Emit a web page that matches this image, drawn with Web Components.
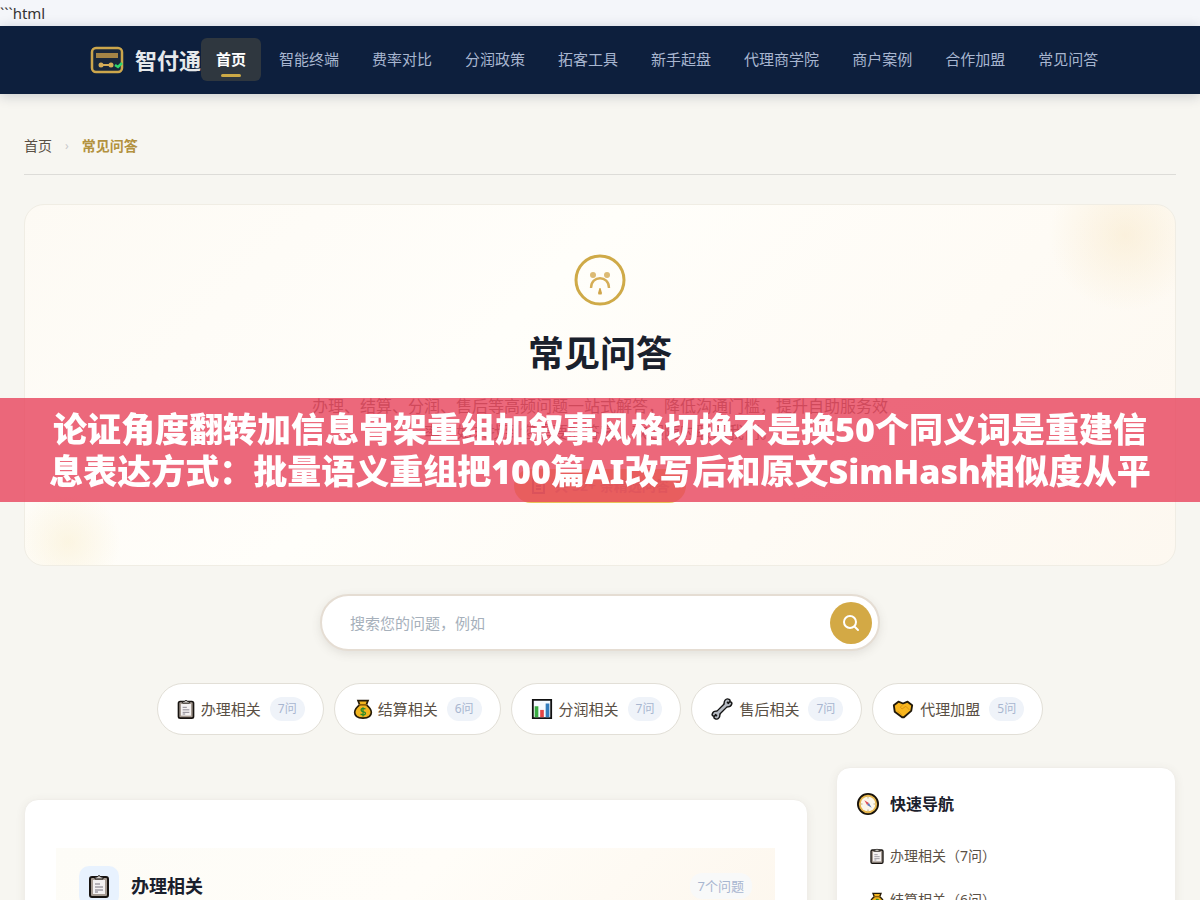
<!DOCTYPE html>
<html lang="zh-CN">
<head>
<meta charset="utf-8">
<meta name="viewport" content="width=device-width, initial-scale=1">
<title>常见问答 - 智付通</title>
<style>
html{scrollbar-width:none}
body{margin:0;background:#f7f6f1;color:#1a202c;font:16px/26px "Noto Sans","Noto Sans CJK SC",sans-serif}
</style>
</head>
<body>
<faq-page></faq-page>
<script>
const define = (name, html, setup) => customElements.define(name, class extends HTMLElement {
  constructor() {
    super();
    const t = document.createElement('template');
    t.innerHTML = html;
    this.attachShadow({mode: 'open'}).append(t.content.cloneNode(true));
  }
  connectedCallback() { if (setup) setup(this, this.shadowRoot); }
});

const icons = {
  clipboard: '<rect x="3" y="3" width="18" height="20" rx="2" fill="#a59a91" stroke="#171310" stroke-width="2"/><path d="M6 6h12v14H6z" fill="#f4f1f1"/><path d="M8 5V3h2q2-3 4 0h2v2z" fill="#d4d0cc" stroke="#171310"/><path d="M8 10h5M8 13h8M8 16h8M8 18h3" stroke="#77727e"/>',
  money: '<path d="M8 7 6 2h12l-2 5c4 3 6 6 6 9 0 5-4 7-10 7S2 21 2 16c0-3 2-6 6-9z" fill="#f2b51e" stroke="#241a08" stroke-width="2"/><path d="M7 7h10" stroke="#8c5e08" stroke-width="2"/><path d="M15 12c-4-2-6 0-5 2s5 1 5 3-3 3-6 1M12 10v11" fill="none" stroke="#298a2a" stroke-width="1.5"/>',
  chart: '<path d="M2 2h20v20H2z" fill="#f5faff" stroke="#111" stroke-width="2"/><path d="M4 9h4v12H4z" fill="#3aac42"/><path d="M10 13h4v8h-4z" fill="#e34545"/><path d="M16 6h4v15h-4z" fill="#337dbd"/>',
  wrench: '<g fill="none" stroke-linecap="round"><g stroke="#141414" stroke-width="6"><path d="M7 17 17 7"/><path d="M3 18c1-3 5-2 5 0 0 2-1 4-3 3M21 6c-1 3-5 2-5 0 0-2 1-4 3-3" stroke-width="5"/></g><g stroke="#b5bac2" stroke-width="3"><path d="M7 17 17 7"/><path d="M3 18c1-3 5-2 5 0 0 2-1 4-3 3M21 6c-1 3-5 2-5 0 0-2 1-4 3-3" stroke-width="2"/></g></g>',
  shake: '<path d="m2 8 5-4 5 2 5-2 5 4-1 6-8 7h-2l-8-6z" fill="#f8b61f" stroke="#21190a" stroke-width="2" stroke-linejoin="round"/><path d="m12 7-3 3 2 2 4-3 4 4M6 14l5 5" fill="none" stroke="#d8920f"/>',
  compass: '<circle cx="12" cy="12" r="11" fill="#e6b64e" stroke="#17120b" stroke-width="2"/><circle cx="12" cy="12" r="8" fill="#fbf7eb"/><path d="M12 4v2M12 18v2M4 12h2M18 12h2" stroke="#b8a77e"/><path d="m8 8 5 3-2 2z" fill="#df4b57"/><path d="m16 16-5-3 2-2z" fill="#5b78ba"/>'
};
define('faq-icon', `<style>:host{display:block;flex:none;width:22px;height:22px}svg{display:block;width:100%;height:100%}</style><svg viewBox="0 0 24 24" aria-hidden="true"></svg>`,
  (el, root) => root.querySelector('svg').innerHTML = icons[el.getAttribute('name')]);

define('nav-link', `<style>
:host{display:block;flex:none}
a{position:relative;display:block;padding:8px 15px 9px;border-radius:6px;color:#a8b6d0;font-size:15px;line-height:26px;text-decoration:none;white-space:nowrap}
:host([active]) a{background:#2f373f;color:#fff;font-weight:700}
:host([active]) a::after{content:"";position:absolute;left:20px;right:20px;bottom:4px;height:3px;border-radius:2px;background:#cca946}
</style><a href="#"><slot></slot></a>`);

define('site-header', `<style>
:host{display:block;background:#0d1f3d;box-shadow:0 2px 12px #0d1f3d33}
nav{display:flex;align-items:center;max-width:1020px;height:68px;margin:auto}
.logo{display:flex;align-items:center;gap:11px;color:#e6e9ec;font-weight:700;font-size:22px;line-height:32px;text-decoration:none;white-space:nowrap}
.logo svg{width:34px;height:28px}
.links{display:flex;gap:3px;padding-bottom:2px}
</style>
<nav><a class="logo" href="#"><svg viewBox="0 0 34 28" aria-hidden="true"><rect x="2" y="2" width="30" height="24" rx="4" fill="#18273b" stroke="#cca64c" stroke-width="2.5"/><path d="M6 7h22v5H6z" fill="#a38446"/><path d="M11 19h10" stroke="#d4ad57" stroke-width="2"/><circle cx="11" cy="19" r="2.5" fill="#d4ad57"/><circle cx="21" cy="19" r="2.5" fill="#d4ad57"/><path d="m25 19 3 2 4-4" fill="none" stroke="#30d66c" stroke-width="2.5"/></svg>智付通</a>
<div class="links"><nav-link active>首页</nav-link><nav-link>智能终端</nav-link><nav-link>费率对比</nav-link><nav-link>分润政策</nav-link><nav-link>拓客工具</nav-link><nav-link>新手起盘</nav-link><nav-link>代理商学院</nav-link><nav-link>商户案例</nav-link><nav-link>合作加盟</nav-link><nav-link>常见问答</nav-link></div></nav>`);

define('bread-crumb', `<style>
:host{display:flex;align-items:center;gap:13px;padding:16px 0;border-bottom:1px solid #dddcd8;font-size:14px;line-height:24px}
a{color:#5a5045;text-decoration:none}i{font-style:normal;color:#c8c9cb;font-size:12px}b{color:#b3923f}
</style><a href="#">首页</a><i>›</i><b>常见问答</b>`);

define('faq-hero', `<style>
:host{display:block;position:relative;overflow:hidden;box-sizing:border-box;min-height:362px;margin-top:29px;padding:48px 24px;border:1px solid #f0ede4;border-radius:20px;text-align:center;background:linear-gradient(135deg,#fdfaf4 0%,#fffefa 40%,#fdf8f0 100%)}
:host::before,:host::after{content:"";position:absolute;border-radius:50%}
:host::before{width:200px;height:200px;right:-50px;top:-70px;background:radial-gradient(circle closest-side,#f8e8c888,#f8e8c800 76%)}
:host::after{width:150px;height:150px;left:-32px;bottom:-52px;background:radial-gradient(circle closest-side,#faf0d499,#faf0d400 70%)}
svg{display:block;margin:auto}
.face{width:54px;height:54px}
h1{margin:18px 0 10px;font-size:36px;line-height:58px}
p{max-width:600px;margin:auto;color:#5a5045;font-size:16px;line-height:26px}
button{display:inline-flex;align-items:center;gap:8px;margin-top:24px;height:34px;padding:0 16px;border:0;border-radius:17px;background:#e8c558;color:#bb984b;font:600 14px/24px "Noto Sans","Noto Sans CJK SC",sans-serif}
button svg{margin:0}
</style>
<svg class="face" viewBox="0 0 54 54" fill="none" aria-hidden="true"><circle cx="27" cy="27" r="24" stroke="#cfaa48" stroke-width="3"/><circle cx="20" cy="22" r="3" fill="#dcba74"/><circle cx="34" cy="22" r="3" fill="#dcba74"/><path d="M18 35c0-13 18-13 18 0" stroke="#d5ad56" stroke-width="2.4"/><path d="M26.5 35h1l1.5 5-.5 1.5h-3L25 40z" fill="#d0a54a"/></svg>
<h1>常见问答</h1><p>办理、结算、分润、售后等高频问题一站式解答，降低沟通门槛，提升自助服务效率，如未找到您需要的答案，欢迎随时联系我们。</p>
<button type="button"><svg width="16" height="16" viewBox="0 0 16 16" fill="none" stroke="#a08348" stroke-width="2" aria-hidden="true"><path d="M3 1h7l4 4v10H3zM6 8h5M6 11h5"/></svg>共 32+ 条精选问答</button>`);

define('search-box', `<style>
:host{display:block;margin-top:28px}
form{display:flex;align-items:center;box-sizing:border-box;width:100%;max-width:560px;height:57px;margin:auto;padding:0 6px 0 26px;border:2px solid #e5ddd3;border-radius:29px;background:#fff;box-shadow:0 3px 10px #5a504520}
input{flex:1;min-width:0;border:0;outline:0;background:none;color:#1a202c;font:15px/24px "Noto Sans","Noto Sans CJK SC",sans-serif}
input::placeholder{color:#a6b0bb;opacity:1}
button{display:grid;place-items:center;width:42px;height:42px;padding:0;border:0;border-radius:50%;background:#d3a945}
</style><form><input type="text" aria-label="搜索问题" placeholder="搜索您的问题，例如"><button type="button" aria-label="搜索"><svg width="18" height="18" viewBox="0 0 18 18" fill="none" stroke="#fff" stroke-width="2" stroke-linecap="round" aria-hidden="true"><circle cx="8" cy="8" r="6"/><path d="m13 13 3 3"/></svg></button></form>`);

define('topic-pill', `<style>
:host{display:block;flex:none}
button{display:flex;align-items:center;height:52px;padding:0 18px;border:1px solid #e2dfd7;border-radius:26px;background:#fff;color:#5a5045;font:15px/24px "Noto Sans","Noto Sans CJK SC",sans-serif;white-space:nowrap}
faq-icon{width:20px;margin-right:5px}
:host([wide]) faq-icon{width:24px}
.n{margin-left:9px;padding:0 8px;border-radius:12px;background:#eff3f9;color:#a8b6d0;font-size:12px;line-height:24px}
</style><button type="button"><faq-icon></faq-icon><slot></slot><span class="n"></span></button>`,
(el, root) => {
  const icon = document.createElement('faq-icon');
  icon.setAttribute('name', el.getAttribute('icon'));
  root.querySelector('faq-icon').replaceWith(icon);
  root.querySelector('.n').textContent = el.getAttribute('count');
});

define('faq-section', `<style>
:host{display:block;box-sizing:border-box;margin-top:32px;min-height:400px;padding:48px 32px 48px 31px;border:1px solid #f0eee9;border-radius:14px;background:#fff;box-shadow:0 2px 10px #5a504514}
header{display:flex;align-items:center;gap:12px;padding:18px 23px;background:linear-gradient(135deg,#fdfcf7,#fffdf8 50%,#fdf7ee)}
.tile{display:grid;place-items:center;width:40px;height:40px;border-radius:10px;background:#e8f2fe}
.tile faq-icon{width:24px;height:24px}
h2{flex:1;margin:0;font-size:18px;line-height:30px}
span{padding:0 8px;border-radius:12px;background:#f8f9f9;color:#a8b6d0;font-size:13px;line-height:26px}
</style><header><div class="tile"><faq-icon name="clipboard"></faq-icon></div><h2>办理相关</h2><span>7个问题</span></header>`);

define('quick-nav', `<style>
:host{display:block;box-sizing:border-box;padding:22px 20px;border:1px solid #f0eee9;border-radius:14px;background:#fff;box-shadow:0 2px 10px #5a504514}
h2{display:flex;align-items:center;gap:11px;margin:0 0 20px;font-size:16px;line-height:28px}
nav{display:grid;gap:8px;padding:0 12px}
a{display:flex;align-items:center;gap:5px;color:#5a5045;font-size:14px;line-height:36px;text-decoration:none}
a faq-icon{width:16px;height:16px}
</style><h2><faq-icon name="compass"></faq-icon>快速导航</h2><nav><a href="#"><faq-icon name="clipboard"></faq-icon>办理相关（7问）</a><a href="#"><faq-icon name="money"></faq-icon>结算相关（6问）</a></nav>`);

define('title-banner', `<style>
:host{display:block;position:fixed;left:0;right:0;top:398px;box-sizing:border-box;padding:10px 48px;background:#e84860d2;color:#fff;text-align:center;font-size:34px;line-height:42px;font-weight:900}
</style><slot></slot>`);

define('faq-page', `<style>
:host{display:block}
.lead{background:#f4f6fa;color:#333;font-size:15px;line-height:26px}
main{padding:24px 24px 0}
.pills{display:flex;justify-content:center;gap:10px;margin-top:32px}
.cols{display:grid;grid-template-columns:minmax(0,1fr) 340px;gap:28px;align-items:start;margin-top:32px}
</style>
<div class="lead">\`\`\`html</div><site-header></site-header>
<main><bread-crumb></bread-crumb><faq-hero></faq-hero><search-box></search-box>
<div class="pills"><topic-pill icon="clipboard" count="7问">办理相关</topic-pill><topic-pill icon="money" count="6问">结算相关</topic-pill><topic-pill wide icon="chart" count="7问">分润相关</topic-pill><topic-pill wide icon="wrench" count="7问">售后相关</topic-pill><topic-pill wide icon="shake" count="5问">代理加盟</topic-pill></div>
<div class="cols"><faq-section></faq-section><quick-nav></quick-nav></div></main>
<title-banner>论证角度翻转加信息骨架重组加叙事风格切换不是换50个同义词是重建信息表达方式：批量语义重组把100篇AI改写后和原文SimHash相似度从平</title-banner>`);
</script>
</body>
</html>
